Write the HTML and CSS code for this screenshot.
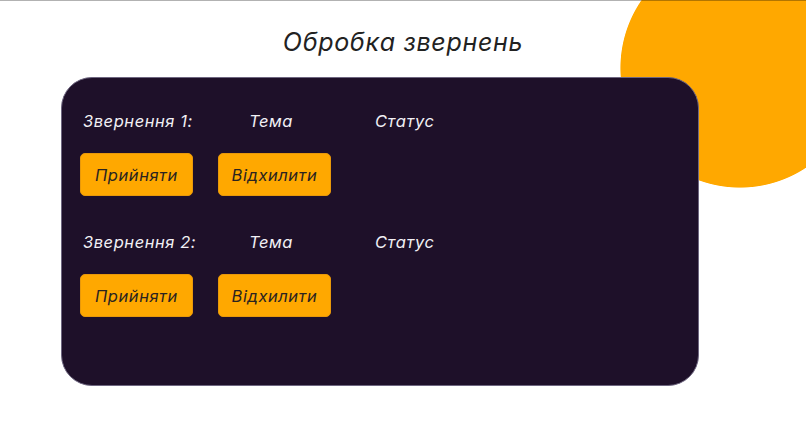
FILE: index.html
```html
<!DOCTYPE html>
<html lang="uk">
<head>
<meta charset="utf-8">
<title>Обробка звернень</title>
<link rel="stylesheet" href="styles.css">
</head>
<body>
<div class="topline"></div>
<main class="page">
  <h1 class="title">Обробка звернень</h1>
  <section class="card">
    <div class="request">
      <div class="meta">
        <span class="name">Звернення 1:</span>
        <span class="topic">Тема</span>
        <span class="status">Статус</span>
      </div>
      <div class="actions">
        <button class="btn">Прийняти</button>
        <button class="btn">Відхилити</button>
      </div>
    </div>
    <div class="request">
      <div class="meta">
        <span class="name">Звернення 2:</span>
        <span class="topic">Тема</span>
        <span class="status">Статус</span>
      </div>
      <div class="actions">
        <button class="btn">Прийняти</button>
        <button class="btn">Відхилити</button>
      </div>
    </div>
  </section>
</main>
</body>
</html>
```
FILE: styles.css
```css
* { box-sizing: border-box; }
html, body {
  margin: 0;
  padding: 0;
  width: 806px;
  height: 437px;
  overflow: hidden;
}
body {
  position: relative;
  font-family: Inter, "Noto Sans", sans-serif;
  font-style: italic;
  background: #ffffff radial-gradient(circle 120px at 740px 68px, #ffa800 99.3%, rgba(255, 168, 0, 0) 100%) no-repeat;
}
.topline {
  position: absolute;
  left: 0;
  top: 0;
  width: 100%;
  height: 1px;
  background: rgba(0, 0, 0, 0.3);
  z-index: 3;
}
.page {
  position: relative;
  z-index: 1;
  display: flex;
  flex-direction: column;
  align-items: flex-start;
}
.title {
  align-self: stretch;
  margin: 26px 0 0 0;
  text-align: center;
  font-size: 25px;
  line-height: 32px;
  font-weight: 400;
  font-style: italic;
  color: #222222;
  letter-spacing: 0.7px;
}
.card {
  margin: 19px 0 0 61px;
  width: 638px;
  height: 309px;
  background: #1e1029;
  border: 1px solid #6e6680;
  border-radius: 31px;
  padding: 33px 0 0 18px;
  display: flex;
  flex-direction: column;
  gap: 36px;
}
.request {
  display: flex;
  flex-direction: column;
  gap: 22px;
}
.meta {
  display: grid;
  grid-template-columns: 166px 126px auto;
  padding-left: 3px;
  color: #f2f0f5;
  font-size: 16.5px;
  line-height: 20px;
  letter-spacing: 0.55px;
}
.actions {
  display: flex;
  gap: 25px;
}
.btn {
  width: 113px;
  height: 43px;
  border: 1px solid #e8980a;
  border-radius: 5px;
  background: #ffa800;
  color: #2a2320;
  font-family: Inter, "Noto Sans", sans-serif;
  font-style: italic;
  font-size: 16.5px;
  letter-spacing: 0.55px;
  padding: 0;
  cursor: pointer;
}
```
